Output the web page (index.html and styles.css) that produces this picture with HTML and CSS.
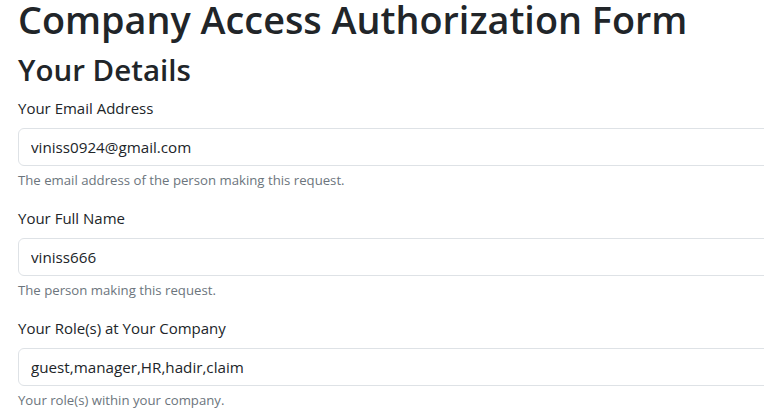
FILE: index.html
```html
<!DOCTYPE html>
<html lang="en">
<head>
    <meta charset="UTF-8">
    <title>Company Access Authorization Form</title>
    <link rel="stylesheet" href="styles.css">
</head>
<body>

<div class="container">
    <h1>Company Access Authorization Form</h1>

    <form id="accessForm">
        <h2>Your Details</h2>

        <div class="field">
            <label for="email">Your Email Address</label>
            <input type="email" id="email" value="viniss0924@gmail.com">
            <div class="form-text">The email address of the person making this request.</div>
        </div>

        <div class="field">
            <label for="fullName">Your Full Name</label>
            <input type="text" id="fullName" value="viniss666">
            <div class="form-text">The person making this request.</div>
        </div>

        <div class="field">
            <label for="roles">Your Role(s) at Your Company</label>
            <input type="text" id="roles" value="guest,manager,HR,hadir,claim">
            <div class="form-text">Your role(s) within your company.</div>
        </div>
    </form>
</div>

</body>
</html>
```

FILE: styles.css
```css
html, body {
    overflow: hidden;
}
body {
    font-family: 'Open Sans', sans-serif;
    font-size: 15px;
    line-height: 24px;
    color: #212529;
    background: white;
    margin: 0;
}
.container {
    width: 820px;
    padding: 0 18px;
}
h1, h2 {
    margin: 0 0 8px 0;
    font-weight: 600;
}
h1 {
    font-size: 37.8px;
    line-height: 40px;
    margin-bottom: 12px;
}
h2 {
    font-size: 29.5px;
    line-height: 36px;
}
.field {
    margin-bottom: 15px;
}
label {
    display: block;
    margin-bottom: 8px;
}
input {
    display: block;
    box-sizing: border-box;
    width: 100%;
    height: 38px;
    padding: 6px 12px;
    font-family: inherit;
    font-size: 15.2px;
    line-height: 24px;
    color: #212529;
    border: 1px solid #dee2e6;
    border-radius: 6px;
    background: white;
}
.form-text {
    margin-top: 4px;
    font-size: 13.2px;
    line-height: 21px;
    color: #6c757d;
}
```
